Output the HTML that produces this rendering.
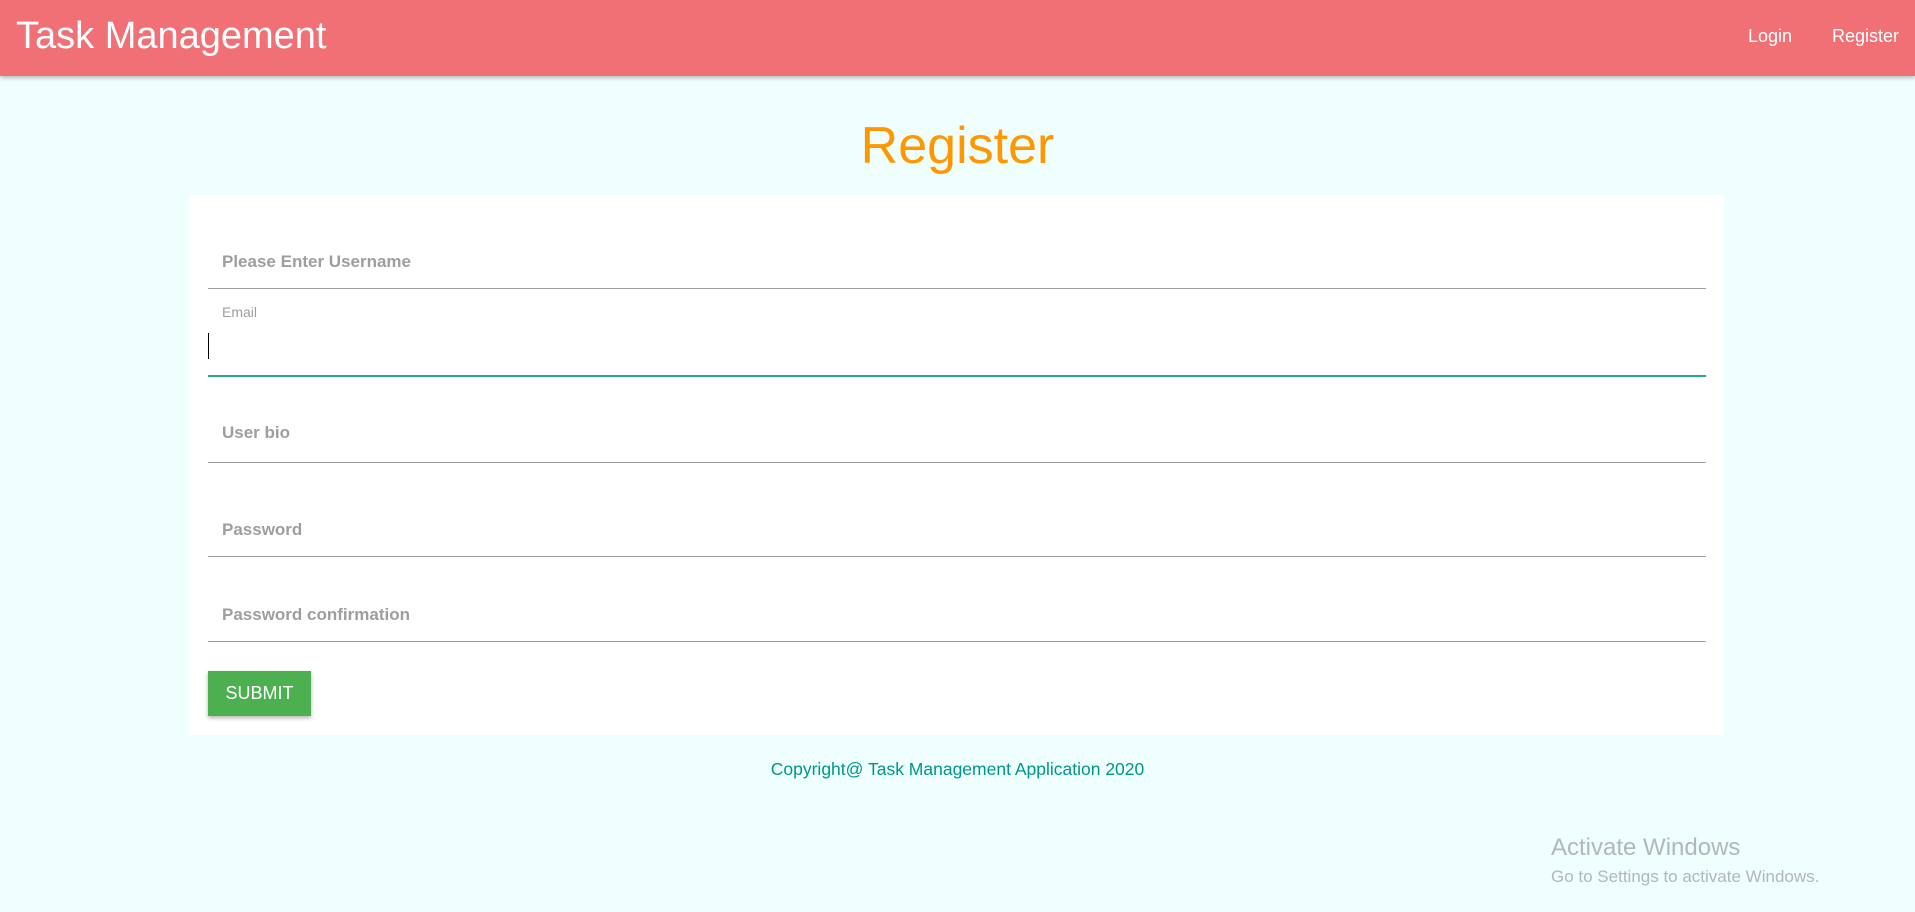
<!DOCTYPE html>
<html><head><meta charset="utf-8">
<style>
*{margin:0;padding:0;box-sizing:border-box}
body{width:1915px;height:912px;background:#effffe;font-family:"Liberation Sans",sans-serif;position:relative;overflow:hidden}
.nav{position:absolute;left:0;top:0;width:1915px;height:76px;background:#f07075;box-shadow:0 2px 4px rgba(0,0,0,.25)}
.title{position:absolute;left:16px;top:15px;font-size:38px;color:#fff}
.nl{position:absolute;top:26px;font-size:18px;color:#fff}
h1{position:absolute;left:0;width:1915px;text-align:center;top:116px;font-size:52px;font-weight:normal;color:#ff9800}
.card{position:absolute;left:189px;top:195px;width:1535px;height:540px;background:#fff}
.line{position:absolute;left:208px;width:1498px;height:1px;background:#9e9e9e}
.ph{position:absolute;left:222px;font-size:17px;font-weight:bold;color:#9e9e9e}
.btn{position:absolute;left:208px;top:671px;width:103px;height:45px;background:#4caf50;color:#fff;font-size:18px;text-align:center;line-height:45px;box-shadow:0 2px 4px rgba(0,0,0,.3)}
.foot{position:absolute;left:0;width:1915px;top:759px;text-align:center;font-size:17.5px;color:#009688}
.aw{position:absolute;left:1551px;color:#b0b8b8}
</style></head><body>
<div class="nav"><div class="title">Task Management</div><div class="nl" style="left:1748px">Login</div><div class="nl" style="left:1832px">Register</div></div>
<h1>Register</h1>
<div class="card"></div>
<div class="ph" style="top:252px">Please Enter Username</div>
<div class="line" style="top:288px"></div>
<div class="ph" style="top:304px;font-size:14px;font-weight:normal">Email</div>
<div style="position:absolute;left:208px;top:333px;width:1px;height:26px;background:#000"></div>
<div class="line" style="top:375px;height:2px;background:#26a69a"></div>
<div class="ph" style="top:423px">User bio</div>
<div class="line" style="top:462px"></div>
<div class="ph" style="top:520px">Password</div>
<div class="line" style="top:556px"></div>
<div class="ph" style="top:605px">Password confirmation</div>
<div class="line" style="top:641px"></div>
<div class="btn">SUBMIT</div>
<div class="foot">Copyright@ Task Management Application 2020</div>
<div class="aw" style="top:834px;font-size:24px">Activate Windows</div>
<div class="aw" style="top:867px;font-size:17px">Go to Settings to activate Windows.</div>
</body></html>
